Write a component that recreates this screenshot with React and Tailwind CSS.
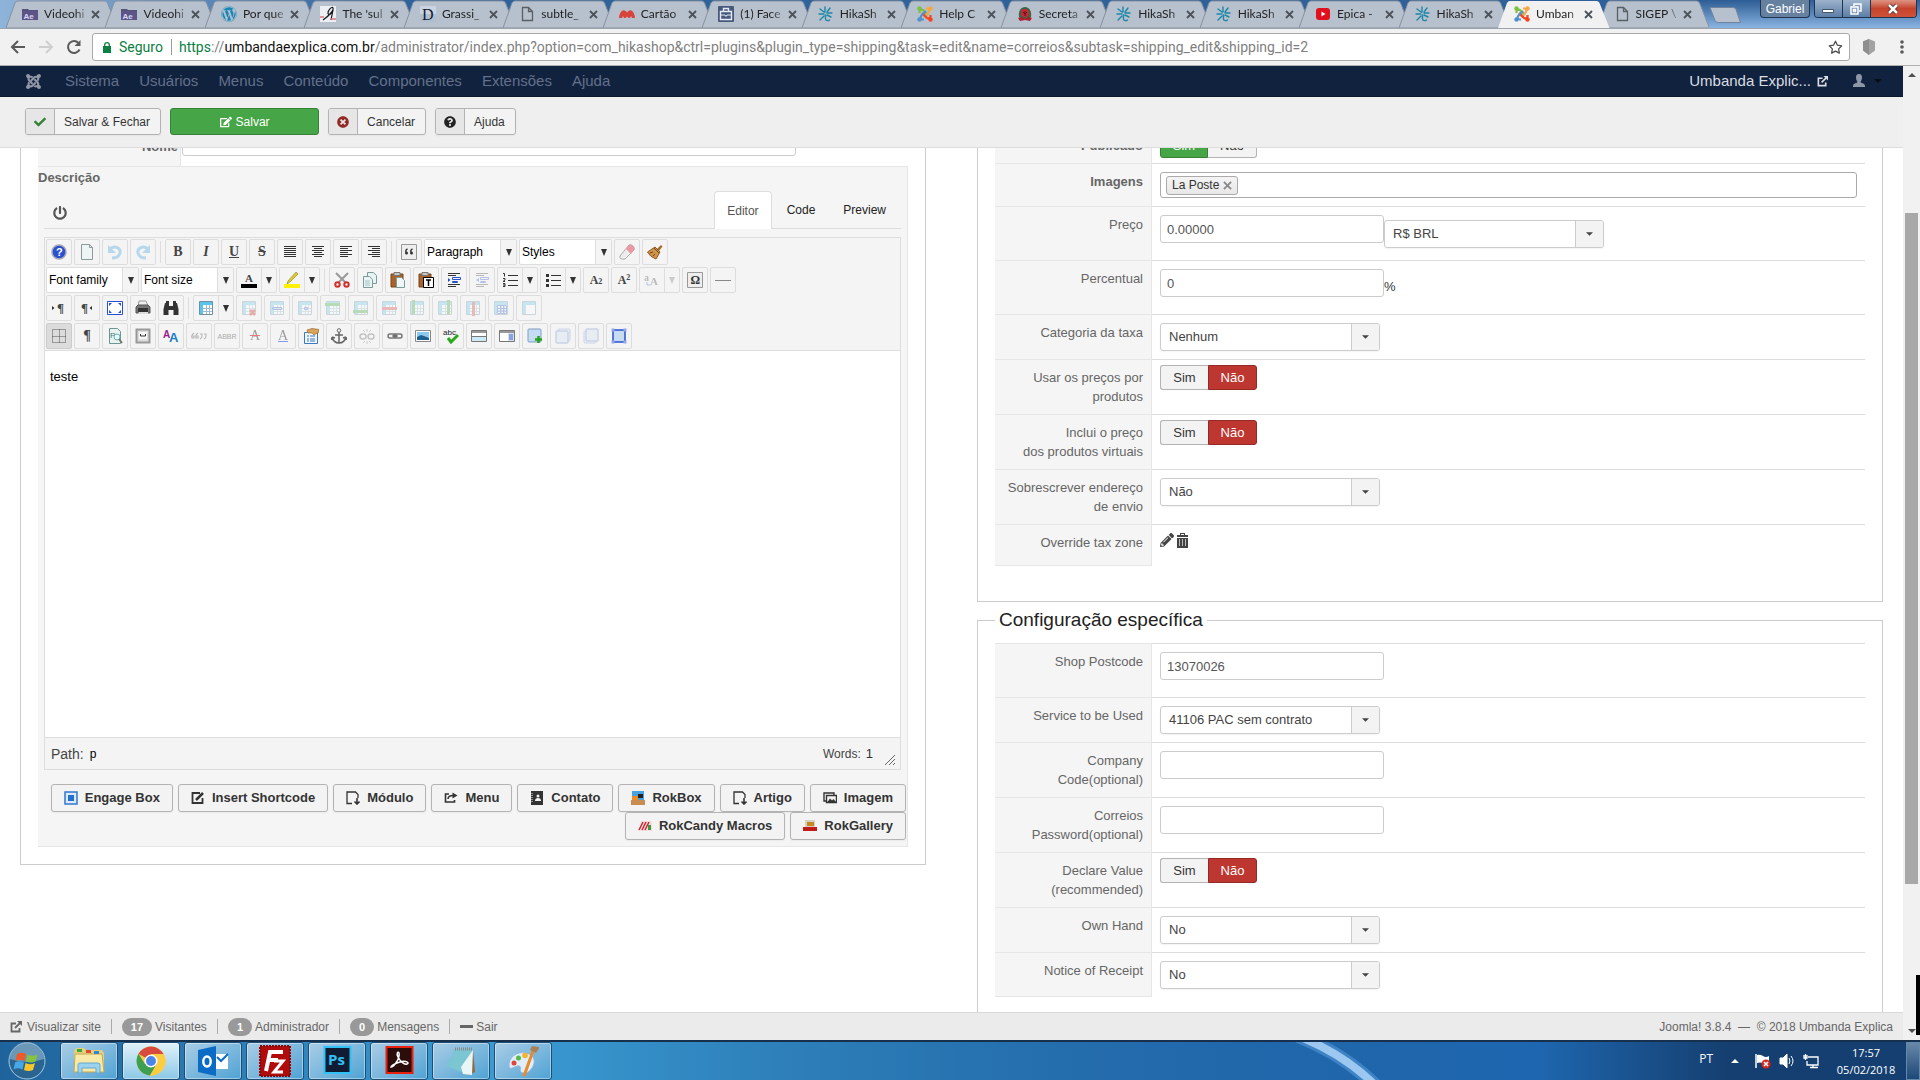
import React, { useState } from 'react';
import { FaJoomla, FaCheck, FaEdit, FaTimesCircle, FaQuestionCircle, FaPowerOff, FaWordpress, FaPencilAlt } from 'react-icons/fa';
import { FiStar } from 'react-icons/fi';

/* ---------- browser tab icons ---------- */

const AfterEffects = () => (
    <svg viewBox="0 0 16 16" className="w-4 h-4">
        <path d="M0 3h6l1 1h9v10H0z" fill="#56507c" />
        <path d="M0 5h16v9H0z" fill="#5b5587" />
        <text x="1.5" y="12.5" fontSize="8" fontWeight="bold" fill="#ddd6f5" fontFamily="Liberation Sans, sans-serif">Ae</text>
    </svg>
);

const Svello = () => (
    <svg viewBox="0 0 16 16" className="w-4 h-4">
        <path d="M0 0h16v16H0z" fill="#eceef4" />
        <path d="M3 14C9 10 14 4 13 2s-5 2-5 5 4 1 5-3l-2 10" fill="none" stroke="#15151c" strokeWidth="1.2" />
        <path d="M0 11h4M11 13h5" stroke="#d77" strokeWidth="1.5" />
    </svg>
);

const LetterD = () => (
    <svg viewBox="0 0 16 16" className="w-4 h-4">
        <path d="M0 0h16v16H0z" fill="#c8d4e2" />
        <path d="M0 8h16v8H0z" fill="#aebfd2" />
        <text x="2" y="14" fontSize="16" fill="#141a2c" fontFamily="Liberation Serif, serif">D</text>
    </svg>
);

const PageIcon = () => (
    <svg viewBox="0 0 16 16" className="w-4 h-4">
        <path d="M3.5 1.5h6l4 4v9h-10zM9.5 1.5v4h4" fill="none" stroke="#5a5f66" strokeWidth="1.3" />
    </svg>
);

const CardIcon = () => (
    <svg viewBox="0 0 16 16" className="w-4 h-4">
        <path d="M0 12C0 8 3 3 5.500 4.500 7 5 7.500 6 8 6.500 8.500 6 9 5 10.500 4.500 13 3 16 8 16 12h-3l-1-2-1 2H9.500L8 10.500 6.500 12H5l-1-2-1 2z" fill="#d9443a" />
    </svg>
);

const BagIcon = () => (
    <svg viewBox="0 0 16 16" className="w-4 h-4">
        <rect width="16" height="16" rx="1" fill="#46597c" />
        <path d="M2.5 5.5h11v8h-11zM5.500 5.500v-3h5v3" fill="none" stroke="#e6ebf3" strokeWidth="1.4" />
        <path d="M3 9h4l1 1.500 1-1.500h4" fill="none" stroke="#e6ebf3" />
    </svg>
);

const HikaIcon = () => (
    <svg viewBox="0 0 16 16" className="w-4 h-4" fill="none" stroke="#1c86a6" strokeWidth="1.4" strokeLinecap="round">
        <path d="M7 1v5M2 3l4 3M12 2L9 6M1 8h5M14 7H9M6 10l-4 4M7.500 9v4c0 2 3 2 4 1M9 9l4 2" />
    </svg>
);

const JoomlaColor = () => (
    <svg viewBox="0 0 16 16" className="w-4 h-4" fill="none" strokeWidth="2.2">
        <path d="M2.500 7V5.500C2.500 3.500 5 3 6.500 4.500L11 9" stroke="#7ac143" />
        <path d="M9 2.500h1.500c2 0 2.500 2.500 1 4L7 11" stroke="#f9a541" />
        <path d="M13.500 9v1.500c0 2-2.500 2.500-4 1L5 7" stroke="#f44321" />
        <path d="M7 13.500H5.500c-2 0-2.500-2.500-1-4L9 5" stroke="#5091cd" />
        <circle cx="2.500" cy="2.500" r="2.200" fill="#7ac143" stroke="none" />
        <circle cx="13.500" cy="2.500" r="2.200" fill="#f9a541" stroke="none" />
        <circle cx="13.500" cy="13.500" r="2.200" fill="#f44321" stroke="none" />
        <circle cx="2.500" cy="13.500" r="2.200" fill="#5091cd" stroke="none" />
    </svg>
);

const CrestIcon = () => (
    <svg viewBox="0 0 16 16" className="w-4 h-4">
        <path d="M2 11C1 5 4 1 8 1s7 4 6 10l-3 3H5z" fill="#3d6647" />
        <circle cx="8" cy="7" r="4" fill="#cf2433" />
        <path d="M6 6l2 2 2-2M8 5v5" stroke="#4a1a20" fill="none" />
        <path d="M1 12l4-1 3 2 3-2 4 1-2 3-5-1-5 1z" fill="#b01c2a" />
    </svg>
);

const YoutubeIcon = () => (
    <svg viewBox="0 0 16 16" className="w-4 h-4">
        <rect x="1" y="2" width="14" height="12" rx="3" fill="#e0101e" />
        <path d="M6.500 5.500v5l4-2.500z" fill="#fff" />
    </svg>
);

const tabs = [
    { title: 'Videohi', icon: <AfterEffects /> },
    { title: 'Videohi', icon: <AfterEffects /> },
    { title: 'Por que', icon: <FaWordpress className="w-4 h-4 text-[#1b87b8]" /> },
    { title: "The 'sul", icon: <Svello /> },
    { title: 'Grassi_', icon: <LetterD /> },
    { title: 'subtle_', icon: <PageIcon /> },
    { title: 'Cartão', icon: <CardIcon /> },
    { title: '(1) Face', icon: <BagIcon /> },
    { title: 'HikaSh', icon: <HikaIcon /> },
    { title: 'Help C', icon: <JoomlaColor /> },
    { title: 'Secreta', icon: <CrestIcon /> },
    { title: 'HikaSh', icon: <HikaIcon /> },
    { title: 'HikaSh', icon: <HikaIcon /> },
    { title: 'Epica -', icon: <YoutubeIcon /> },
    { title: 'HikaSh', icon: <HikaIcon /> },
    { title: 'Umban', icon: <JoomlaColor />, active: true },
    { title: 'SIGEP \\', icon: <PageIcon /> },
];

const BrowserTab = ({ tab }) => (
    <div className={`relative flex-1 min-w-0 flex items-center h-7 pl-4 pr-[5px] ${tab.active ? 'z-10' : ''}`}>
        <svg className="absolute left-0 top-0 h-full w-[calc(100%+12px)]" viewBox="0 0 112 28" preserveAspectRatio="none">
            <path d="M0 28L9 3q1-2 3-2h87q2 0 3 2l10 25z" fill={tab.active ? '#f2f1f2' : '#b7c1ce'} stroke="#8791a0" strokeWidth={tab.active ? 0 : 1} />
        </svg>
        <span className="relative shrink-0">{tab.icon}</span>
        <span className="relative flex-1 ml-1.5 whitespace-nowrap text-xs text-[#222] [mask-image:linear-gradient(to_right,#000_75%,transparent_115%)]">{tab.title}</span>
        <button aria-label="Fechar guia" className="relative shrink-0 ml-1.5">
            <svg viewBox="0 0 9 9" className="w-[9px] h-[9px]"><path d="M1 1l7 7M8 1L1 8" stroke="#4c5259" strokeWidth="1.8" /></svg>
        </button>
    </div>
);

const Browser = () => (
    <header className="shrink-0 font-[Lato,'Liberation_Sans',sans-serif]">
        <div className="flex h-7 pl-1.5 bg-linear-to-r from-[#8fb4da] via-[#2f639c] via-20% to-[#2d5f98]">
            {tabs.map((tab, i) => <BrowserTab key={i} tab={tab} />)}
            <div className="w-[223px] shrink-0 flex bg-linear-to-b from-[#2c5d94] to-[#8ab4e2]">
                <button aria-label="Nova guia" className="mt-[7px] ml-3 w-8 h-4">
                    <svg viewBox="0 0 32 16" className="w-8 h-4"><path d="M1 .5h23q2 0 3 2l4.500 13H9q-2 0-3-2z" fill="#b7c1ce" stroke="#71839b" /></svg>
                </button>
                <button className="ml-[19px] w-[50px] h-[18px] rounded-b border border-t-0 border-[#20344f] bg-[#66819f] font-['Liberation_Sans',sans-serif] text-xs leading-4 text-white">Gabriel</button>
                <div className="ml-1 flex h-[18px] w-[103px] overflow-hidden rounded-b border border-t-0 border-[#20344f]">
                    <button aria-label="Minimizar" className="w-7 border-r border-[#20344f] bg-linear-to-b from-[#9db3cc] to-[#5c7ea6] flex items-center justify-center">
                        <svg viewBox="0 0 12 12" className="w-3 h-3"><path d="M.5 6.500h11v3H.5z" fill="#fff" stroke="#44546a" /></svg>
                    </button>
                    <button aria-label="Restaurar" className="w-7 border-r border-[#20344f] bg-linear-to-b from-[#9db3cc] to-[#5c7ea6] flex items-center justify-center">
                        <svg viewBox="0 0 12 12" className="w-3 h-3" fill="none" stroke="#fff" strokeWidth="1.500"><path d="M4 3V1h7v7H9M1 4h7v7H1zM3.500 6.500h2v2h-2z" /></svg>
                    </button>
                    <button aria-label="Fechar" className="flex-1 bg-linear-to-b from-[#dc9384] via-[#c5432c] to-[#cf5238] flex items-center justify-center">
                        <svg viewBox="0 0 12 12" className="w-3 h-3"><path d="M2 2l8 8M10 2l-8 8" stroke="#4a2723" strokeWidth="4" /><path d="M2 2l8 8M10 2l-8 8" stroke="#fff" strokeWidth="2.500" /></svg>
                    </button>
                </div>
            </div>
        </div>
        <div className="flex items-center h-[38px] border-y border-t-[#9aa3ae] border-b-[#b0b0b0] bg-[#f2f1f2] pl-2.5">
            <div className="flex w-[82px] gap-3">
                <button aria-label="Voltar"><svg viewBox="0 0 16 16" className="w-4 h-4" fill="none" stroke="#5a5a5a" strokeWidth="2"><path d="M15 8H2M8 2L2 8l6 6" /></svg></button>
                <button aria-label="Avançar"><svg viewBox="0 0 16 16" className="w-4 h-4" fill="none" stroke="#cfcfcf" strokeWidth="2"><path d="M1 8h13M8 2l6 6-6 6" /></svg></button>
                <button aria-label="Recarregar"><svg viewBox="0 0 16 16" className="w-4 h-4" fill="none" stroke="#5a5a5a" strokeWidth="2"><path d="M13.500 10.500A6 6 0 1 1 12.500 4" /><path d="M14.500 1v6h-6z" fill="#5a5a5a" stroke="none" /></svg></button>
            </div>
            <div className="flex flex-1 items-center h-7 rounded-[3px] border border-[#a9a9a9] bg-white pl-2.5 pr-1.5 font-[Roboto,'Liberation_Sans',sans-serif] text-sm whitespace-nowrap">
                <svg viewBox="0 0 8 11" className="w-2 h-[11px] mr-2"><path d="M0 4h8v7H0z" fill="#0b8043" /><path d="M1.700 4.500V3a2.300 2.300 0 0 1 4.600 0v1.500" fill="none" stroke="#0b8043" strokeWidth="1.300" /></svg>
                <span className="w-11 text-[#0b8043]">Seguro</span>
                <span className="w-px h-4 bg-[#9a9a9a] ml-2 mr-[7px]" />
                <span className="flex-1 text-[#7f7f7f]"><span className="text-[#0b8043]">https</span>://<span className="text-[#111]">umbandaexplica.com.br</span>/administrator/index.php?option=com_hikashop&amp;ctrl=plugins&amp;plugin_type=shipping&amp;task=edit&amp;name=correios&amp;subtask=shipping_edit&amp;shipping_id=2</span>
                <FiStar className="w-[15px] h-[15px] text-[#4a4a4a]" />
            </div>
            <svg viewBox="0 0 14 16" className="w-3.5 h-4 ml-3"><path d="M7 0l6 2.500v9L7 16l-6-4.500v-9z" fill="#a3a3a3" /><path d="M7 0v16l-6-4.500v-9z" fill="#8e8e8e" /></svg>
            <svg viewBox="0 0 4 14" className="w-1 h-3.5 ml-6 mr-4" fill="#5a5a5a"><circle cx="2" cy="2" r="1.800" /><circle cx="2" cy="7" r="1.800" /><circle cx="2" cy="12" r="1.800" /></svg>
        </div>
    </header>
);

/* ---------- admin bars ---------- */

const ExternalIcon = ({ className }) => (
    <svg viewBox="0 0 12 12" className={className} fill="none" stroke="currentColor" strokeWidth="1.800">
        <path d="M6 2.500H1.500v8h8V7M5 7l5-5" />
        <path d="M7 0h5v5z" fill="currentColor" stroke="none" />
    </svg>
);

const menus = ['Sistema', 'Usuários', 'Menus', 'Conteúdo', 'Componentes', 'Extensões', 'Ajuda'];

const Navbar = () => (
    <nav className="flex items-center h-[31px] shrink-0 border-b border-[#0b182c] bg-[#10223e] pl-[25px] pr-[21px] text-[15px] text-[#64708a]">
        <FaJoomla className="w-[17px] h-[17px] mr-[13px] text-[#9299a6]" />
        {menus.map((m) => <a key={m} href="#" className="px-2.5">{m}</a>)}
        <a href="#" className="ml-auto flex items-center gap-1.5 text-[#dadde2]">Umbanda Explic... <ExternalIcon className="w-[11px] h-[11px]" /></a>
        <button aria-label="Conta" className="ml-6 flex items-center gap-2">
            <svg viewBox="0 0 14 14" className="w-3.5 h-3.5" fill="#8e97a6"><path d="M7 0c2.200 0 3 1.500 3 3.500S9 7 8.500 8c0 1 4.500 1 4.500 4v1H1v-1c0-3 4.500-3 4.500-4C5 7 4 5.500 4 3.500S4.800 0 7 0z" /></svg>
            <svg viewBox="0 0 8 4" className="w-2 h-1"><path d="M0 0h8L4 4z" fill="#060d18" /></svg>
        </button>
    </nav>
);

const ToolButton = ({ icon, children }) => (
    <button className="flex h-[27px] overflow-hidden rounded-[3px] border border-[#b3b3b3] bg-[#f3f3f3] text-xs text-[#333] shadow-xs">
        <span className="flex items-center justify-center w-[29px] h-full border-r border-[#b3b3b3] bg-[#e6e6e6]">{icon}</span>
        <span className="pl-[9px] pr-2.5 self-center">{children}</span>
    </button>
);

const Subhead = () => (
    <div className="relative z-10 flex items-center gap-[9px] h-[51px] shrink-0 border-b border-[#dcdcdc] bg-[#efefef] px-[25px] pb-px">
        <ToolButton icon={<FaCheck className="w-3 h-3 text-[#378137]" />}>Salvar &amp; Fechar</ToolButton>
        <button className="flex items-center justify-center gap-1 w-[149px] h-[27px] rounded-[3px] border border-[#378137] bg-[#46a546] text-xs text-white">
            <FaEdit className="w-3 h-3" /> Salvar
        </button>
        <ToolButton icon={<FaTimesCircle className="w-3 h-3 text-[#942a25]" />}>Cancelar</ToolButton>
        <ToolButton icon={<FaQuestionCircle className="w-3 h-3 text-[#222]" />}>Ajuda</ToolButton>
    </div>
);

/* ---------- form parts ---------- */

const Row = ({ label, id, bold, last, tight, children }) => (
    <div className="flex">
        <label htmlFor={id} className={`w-[157px] shrink-0 border-t border-r border-[#e6e6e6] bg-[#f5f5f5] pt-2 pr-2 text-right whitespace-pre-line leading-[19px] text-[#666] ${bold ? 'font-bold' : 'pb-2'} ${last ? 'border-b min-h-[42px]' : ''}`}>{label}</label>
        <div className={`flex flex-1 items-start border-t border-[#ddd] px-2 ${tight ? 'py-[5px]' : 'py-2'}`}>{children}</div>
    </div>
);

const TextBox = ({ id, value = '' }) => (
    <input id={id} type="text" defaultValue={value} className="w-56 h-7 mb-[9px] rounded-[3px] border border-[#ccc] bg-white px-1.5 text-[13px] text-[#555]" />
);

const SelectBox = ({ id, value, label, className = '' }) => (
    <div className={`relative w-[220px] h-7 ${className}`}>
        <select id={id} aria-label={label} className="w-full h-full appearance-none rounded-[3px] border border-[#ccc] bg-white pl-2 text-[13px] text-[#444] shadow-xs">
            <option>{value}</option>
        </select>
        <span className="pointer-events-none absolute inset-y-px right-px flex w-7 items-center justify-center rounded-r-[2px] border-l border-[#ccc] bg-[#f3f3f3]">
            <svg viewBox="0 0 8 4" className="w-[7px] h-1"><path d="M0 0h8L4 4z" fill="#444" /></svg>
        </span>
    </div>
);

const YesNo = ({ id, initial = false }) => {
    const [on, setOn] = useState(initial);
    return (
        <div className="flex h-[25px] text-[13px] leading-[23px] text-center">
            <button id={id} onClick={() => setOn(true)} className={on ? 'w-12 rounded-l-[3px] border border-[#378137] bg-[#46a546] text-white' : 'w-12 rounded-l-[3px] border border-r-0 border-[#b3b3b3] bg-[#f3f3f3] text-[#333]'}>Sim</button>
            <button onClick={() => setOn(false)} className={on ? 'w-[49px] rounded-r-[3px] border border-l-0 border-[#b3b3b3] bg-[#f3f3f3] text-[#333]' : 'w-[49px] rounded-r-[3px] border border-[#942a25] bg-[#bd362f] text-white'}>Não</button>
        </div>
    );
};

/* ---------- editor toolbar icons ---------- */

const Svg = ({ children, off }) => <svg viewBox="0 0 16 16" className={`w-4 h-4 ${off ? 'opacity-30' : ''}`} fill="none">{children}</svg>;

const Lines = ({ d, off, children }) => <Svg off={off}><path d={d} stroke="#333" strokeWidth="1" />{children}</Svg>;

const Serif = ({ className = '', children }) => <span className={`font-['Liberation_Serif',serif] font-bold text-sm leading-none text-[#444] ${className}`}>{children}</span>;

const Grid = ({ off = true, children }) => (
    <Svg off={off}>
        <path d="M1.500 1.500h13v13h-13z" fill="#fff" stroke="#6d8fa0" />
        <path d="M2 2h12v3H2zM2 5h3v9H2z" fill="#5cc3ea" />
        <path d="M5 8.500h9M5 11.500h9M8.500 5v9M11.500 5v9" stroke="#9ebccc" />
        {children}
    </Svg>
);

const Paste = ({ children }) => (
    <Svg>
        <path d="M1 2h12v13H1z" fill="#a8622b" stroke="#7d4519" />
        <path d="M4 .5h6v3H4z" fill="#c9c9c9" stroke="#777" />
        {children}
    </Svg>
);

const Window = ({ children }) => (
    <Svg>
        <path d="M.5 2.500h15v11H.5z" fill="#fff" stroke="#777" />
        <path d="M1 3h14v2H1z" fill="#999" />
        {children}
    </Svg>
);

const Btn = ({ label, active, children }) => (
    <button aria-label={label} className={`flex w-[26px] h-[26px] shrink-0 items-center justify-center rounded-[2px] border ${active ? 'border-[#ccc] bg-[#dcdcdc]' : 'border-[#ddd] bg-[#f4f4f4]'}`}>{children}</button>
);

const Split = ({ label, off, children }) => (
    <div className="flex w-[41px] h-[26px] rounded-[2px] border border-[#ddd] bg-[#f4f4f4]">
        <button aria-label={label} className="flex w-[25px] items-center justify-center border-r border-[#ddd]">{children}</button>
        <button aria-label={`${label} opções`} className="flex flex-1 items-center justify-center"><Down off={off} /></button>
    </div>
);

const Down = ({ off }) => <svg viewBox="0 0 6 7" className="w-1.5 h-[7px]"><path d="M0 0h6L3 7z" fill={off ? '#ccc' : '#333'} /></svg>;

const Sep = () => <span className="w-px h-[22px] mx-0.5 my-0.5 bg-[#ddd]" />;

const ListBox = ({ value }) => (
    <div className="relative w-[93px] h-[26px]">
        <select aria-label={value} className="w-full h-full appearance-none rounded-[2px] border border-[#ddd] bg-white pl-0.5 text-xs text-black">
            <option>{value}</option>
        </select>
        <span className="pointer-events-none absolute inset-y-px right-px flex w-4 items-center justify-center border-l border-[#ddd] bg-[#f4f4f4]"><Down /></span>
    </div>
);

const Toolbar = () => (
    <div className="flex flex-col gap-0.5 border-b border-[#ddd] p-px text-[#444]">
        <div className="flex gap-0.5">
            <Btn label="Ajuda"><Svg><circle cx="8" cy="8" r="7" fill="#2a4fd0" stroke="#a9a9b5" strokeWidth="1.500" /><text x="5" y="12" fontSize="11" fontWeight="bold" fill="#fff" fontFamily="Liberation Sans, sans-serif">?</text></Svg></Btn>
            <Btn label="Novo"><Svg><path d="M2.500.500h8l3 3v12h-11z" fill="#eef6f5" stroke="#8a9a9a" /><path d="M10.500.500v3h3" stroke="#8a9a9a" /></Svg></Btn>
            <Btn label="Desfazer"><Svg off><path d="M3 5c5-4 11-1 10 4-1 4-5 5-8 5" stroke="#2f95dd" strokeWidth="3" /><path d="M1 1v8h8z" fill="#2f95dd" /></Svg></Btn>
            <Btn label="Refazer"><Svg off><path d="M13 5C8 1 2 4 3 9c1 4 5 5 8 5" stroke="#2f95dd" strokeWidth="3" /><path d="M15 1v8H7z" fill="#2f95dd" /></Svg></Btn>
            <Sep />
            <Btn label="Negrito"><Serif>B</Serif></Btn>
            <Btn label="Itálico"><Serif className="italic">I</Serif></Btn>
            <Btn label="Sublinhado"><Serif className="underline">U</Serif></Btn>
            <Btn label="Tachado"><Serif className="line-through">S</Serif></Btn>
            <Btn label="Justificar"><Lines d="M2 2.500h12M2 4.500h12M2 6.500h12M2 8.500h12M2 10.500h12M2 12.500h12" /></Btn>
            <Btn label="Centralizar"><Lines d="M2 2.500h12M4 4.500h8M2 6.500h12M4 8.500h8M2 10.500h12M4 12.500h8" /></Btn>
            <Btn label="Esquerda"><Lines d="M2 2.500h12M2 4.500h8M2 6.500h12M2 8.500h8M2 10.500h12M2 12.500h8" /></Btn>
            <Btn label="Direita"><Lines d="M2 2.500h12M6 4.500h8M2 6.500h12M6 8.500h8M2 10.500h12M6 12.500h8" /></Btn>
            <Sep />
            <Btn label="Citação"><Svg><path d="M.500.500h15v15H.500z" fill="#eee" stroke="#999" /><path d="M6.500 5C5 5.500 4.500 7 5 8M11.500 5C10 5.500 9.500 7 10 8" stroke="#333" strokeWidth="1.500" /><circle cx="5.500" cy="9" r="1.500" fill="#333" /><circle cx="10.500" cy="9" r="1.500" fill="#333" /></Svg></Btn>
            <ListBox value="Paragraph" />
            <ListBox value="Styles" />
            <Btn label="Borracha"><Svg><path d="M1 12L10 1q2-1 4 1t1 4L6 15q-6 1-5-3z" fill="#eee" stroke="#aaa" /><path d="M7 5l3-4q2-1 4 1t1 4l-3 4z" fill="#eb98a4" /></Svg></Btn>
            <Btn label="Limpar"><Svg><path d="M10 5l4-4 1.500 1.500L12 7z" fill="#a5692c" /><path d="M8 3l5 5-4 7Q3 13 .500 8z" fill="#cf944c" stroke="#8d5a24" /><path d="M7 4l5 5M3 9l3-1M6 12l2-2" stroke="#70451a" /></Svg></Btn>
        </div>
        <div className="flex gap-0.5">
            <ListBox value="Font family" />
            <ListBox value="Font size" />
            <Split label="Cor do texto"><Svg><text x="4" y="10" fontSize="11" fontWeight="bold" fill="#444" fontFamily="Liberation Serif, serif">A</text><path d="M0 12h16v4H0z" fill="#000" /></Svg></Split>
            <Split label="Realce"><Svg><path d="M4 9l8-9 2 2-8 8-3 2z" fill="#e0cb2c" stroke="#8a7a22" strokeWidth=".6" /><path d="M0 12h16v4H0z" fill="#fff200" /></Svg></Split>
            <Sep />
            <Btn label="Recortar"><Svg><path d="M2 1l10 10M14 1L4 11" stroke="#999" strokeWidth="2" /><circle cx="3.500" cy="12.500" r="2.200" stroke="#d3302c" strokeWidth="2" /><circle cx="12.500" cy="12.500" r="2.200" stroke="#d3302c" strokeWidth="2" /></Svg></Btn>
            <Btn label="Copiar"><Svg><path d="M5.500.500h6l3 3v8h-9z" fill="#e8f3f3" stroke="#7d9a9a" /><path d="M1.500 4.500h6l3 3v8h-9z" fill="#e8f3f3" stroke="#7d9a9a" /><path d="M3 9h5M3 11h5M3 13h5" stroke="#a6c4c4" /></Svg></Btn>
            <Btn label="Colar"><Paste><path d="M6.500 5.500h5l3 3v7h-8z" fill="#eef6f6" stroke="#7d9a9a" /></Paste></Btn>
            <Btn label="Colar texto"><Paste><path d="M5.500 5.500h10v10h-10z" fill="#fff" stroke="#000" /><path d="M8 8h5M10.500 8v6" stroke="#000" strokeWidth="1.500" /></Paste></Btn>
            <Btn label="Aumentar recuo"><Lines d="M2 1.500h12M2 3.500h8M2 12.500h12M2 14.500h8"><path d="M6.500 5.500h8v2h-8zM6.500 9.500h5v1h-5z" stroke="#2750cf" /><path d="M2 6v4l2.500-2z" fill="#2750cf" /></Lines></Btn>
            <Btn label="Diminuir recuo"><Lines off d="M2 1.500h12M2 3.500h8M2 12.500h12M2 14.500h8"><path d="M6.500 5.500h8v2h-8zM6.500 9.500h5v1h-5z" stroke="#2750cf" /><path d="M5 6v4L2 8z" fill="#2750cf" /></Lines></Btn>
            <Split label="Lista numerada"><Lines d="M6 3.500h10M6 8.500h10M6 13.500h10"><path d="M1 1.500h1.500v3M1 6.500h2v1.500l-2 1.500h2M1 11.500h2v3H1M1 13h2" stroke="#333" /></Lines></Split>
            <Split label="Lista"><Lines d="M6 3.500h10M6 8.500h10M6 13.500h10"><path d="M1 2h3v3H1zM1 7h3v3H1zM1 12h3v3H1z" fill="#333" /></Lines></Split>
            <Btn label="Subscrito"><Serif className="text-xs">A<span className="text-[8px]">2</span></Serif></Btn>
            <Btn label="Sobrescrito"><Serif className="text-xs">A<sup className="text-[8px]">2</sup></Serif></Btn>
            <Split label="Maiúsculas" off><Svg off><text x="0" y="9" fontSize="10" fontWeight="bold" fill="#333" fontFamily="Liberation Serif, serif">a</text><text x="6" y="13" fontSize="11" fontWeight="bold" fill="#333" fontFamily="Liberation Serif, serif">A</text><path d="M3 10v3h3" stroke="#2750cf" /></Svg></Split>
            <Btn label="Símbolo"><Svg><path d="M.500.500h15v15H.500z" fill="#eee" stroke="#999" /><text x="3.500" y="12" fontSize="12" fontWeight="bold" fill="#333" fontFamily="Liberation Serif, serif">Ω</text></Svg></Btn>
            <Btn label="Linha"><Svg><path d="M0 8.500h16" stroke="#888" /></Svg></Btn>
        </div>
        <div className="flex gap-0.5">
            <Btn label="Esquerda para direita"><Svg><path d="M1 6v4l2.500-2z" fill="#333" /><text x="6" y="12" fontSize="13" fontWeight="bold" fill="#444" fontFamily="Liberation Serif, serif">¶</text></Svg></Btn>
            <Btn label="Direita para esquerda"><Svg><path d="M13 6v4l-2.500-2z" fill="#333" /><text x="2" y="12" fontSize="13" fontWeight="bold" fill="#444" fontFamily="Liberation Serif, serif">¶</text></Svg></Btn>
            <Btn label="Tela cheia"><Svg><path d="M.500 1.500h15v13H.500z" fill="#fff" stroke="#2750cf" /><path d="M2 6V3h3zM11 3h3v3zM2 10v3h3zM14 10v3h-3z" fill="#2750cf" /></Svg></Btn>
            <Btn label="Imprimir"><Svg><path d="M4 1h7l2 5H3z" fill="#eee" stroke="#999" /><path d="M1 7l2-2h10l2 2v6H1z" fill="#777" stroke="#555" /><path d="M3 8h10v4H3z" fill="#333" /><path d="M4 12h9v2H3z" fill="#ddd" /></Svg></Btn>
            <Btn label="Localizar"><Svg><path d="M2 3h4v3h4V3h4l1.500 6v6h-5v-5h-5v5H.500V9zM3 1h3v2H3zM10 1h3v2h-3z" fill="#333" /></Svg></Btn>
            <Sep />
            <Split label="Tabela"><Grid off={false} /></Split>
            <Btn label="Excluir tabela"><Grid><path d="M9 10l5 5M14 10l-5 5" stroke="#c00" strokeWidth="2.500" /></Grid></Btn>
            <Btn label="Linha da tabela"><Grid><path d="M3.500 7.500h9v2h-9z" stroke="#2750cf" /></Grid></Btn>
            <Btn label="Célula"><Grid><path d="M7.500 7.500h3v2h-3z" stroke="#2750cf" /></Grid></Btn>
            <Btn label="Linha antes"><Grid><path d="M0 3h15v3H0z" fill="#2fa52f" /></Grid></Btn>
            <Btn label="Linha depois"><Grid><path d="M0 10h15v3H0z" fill="#2fa52f" /></Grid></Btn>
            <Btn label="Excluir linha"><Grid><path d="M1 7h15v3H1z" fill="#cf3535" /></Grid></Btn>
            <Btn label="Coluna antes"><Grid><path d="M3 0h3v14H3z" fill="#2fa52f" /></Grid></Btn>
            <Btn label="Coluna depois"><Grid><path d="M10 0h3v14h-3z" fill="#2fa52f" /></Grid></Btn>
            <Btn label="Excluir coluna"><Grid><path d="M7 2h3v14H7z" fill="#cf3535" /></Grid></Btn>
            <Btn label="Dividir células"><Grid><path d="M4.500 5.500h9v8h-9zM4.500 8.500h9M4.500 11h9M7.500 5.500v8M10.500 5.500v8" stroke="#2750cf" /></Grid></Btn>
            <Btn label="Mesclar células"><Grid><path d="M5 5h9v9H5z" fill="#fff" /></Grid></Btn>
        </div>
        <div className="flex gap-0.5">
            <Btn label="Guias" active><Svg><path d="M1.500 1.500h13v13h-13zM1.500 8.500h13M8.500 1.500v13" stroke="#555" strokeDasharray="1 1" /></Svg></Btn>
            <Btn label="Caracteres"><Serif>¶</Serif></Btn>
            <Btn label="Visualizar"><Svg><path d="M2.500.500h8l3 3v12h-11z" fill="#e8f3f1" stroke="#6f9494" /><text x="3" y="10" fontSize="8" fill="#357b7b" fontFamily="Liberation Sans, sans-serif">P</text><circle cx="10" cy="9" r="3" stroke="#7aa" fill="#dff" /><path d="M12 11l3 4" stroke="#777" strokeWidth="2" /></Svg></Btn>
            <Btn label="Espaço"><Svg><path d="M1.500 1.500h13v13h-13z" fill="#ddd" stroke="#999" strokeWidth="2" /><path d="M4 4h8v7H4z" fill="#f8f8f8" /><path d="M5.500 6v2h5V6" stroke="#333" /></Svg></Btn>
            <Btn label="Estilo"><Svg><text x="0" y="10" fontSize="10" fontWeight="bold" fill="#9c1b8c" fontFamily="Liberation Sans, sans-serif">A</text><text x="6" y="14" fontSize="13" fontWeight="bold" fill="#1681c8" fontFamily="Liberation Sans, sans-serif">A</text></Svg></Btn>
            <Btn label="Cite"><Svg off><path d="M3 5Q0 7 1 10h2V8H1M7 5Q4 7 5 10h2V8H5M9 6h2v2q0 2-2 3M13 6h2v2q0 2-2 3" stroke="#333" strokeWidth="1.200" /></Svg></Btn>
            <Btn label="ABBR"><span className="text-[7px] leading-none text-[#aaa]">ABBR</span></Btn>
            <Btn label="Removido"><Serif className="font-normal opacity-50 line-through decoration-red-600">A</Serif></Btn>
            <Btn label="Inserido"><Serif className="font-normal opacity-50 underline decoration-blue-700">A</Serif></Btn>
            <Btn label="Atributos"><Svg><path d="M1.500 4.500h13v11h-13z" fill="#f0f6fc" stroke="#3a78c0" /><path d="M4 8h2M7 8h5M4 11h2M7 11h5M4 13h2M7 13h5" stroke="#3a78c0" /><path d="M4 2l5-1.500 7 1V4l-5 3-2-2H5z" fill="#d9a45b" stroke="#9b6d2e" strokeWidth=".7" /></Svg></Btn>
            <Btn label="Âncora"><Svg><circle cx="8" cy="2.500" r="1.800" stroke="#666" /><path d="M8 4v11M4 7h8M1 9c1 4 4 6 7 6s6-2 7-6M1 9l-.5 3M1 9l3 1M15 9l.5 3M15 9l-3 1" stroke="#666" strokeWidth="1.500" /></Svg></Btn>
            <Btn label="Remover link"><Svg off><rect x="1" y="6" width="6" height="5" rx="2.500" stroke="#555" strokeWidth="1.500" /><rect x="9" y="6" width="6" height="5" rx="2.500" stroke="#555" strokeWidth="1.500" /><path d="M8 1v3M8 13v3M4 2l2 2M12 2l-2 2M4 15l2-2M12 15l-2-2" stroke="#777" /></Svg></Btn>
            <Btn label="Link"><Svg><rect x="1" y="6" width="8" height="4" rx="2" stroke="#777" strokeWidth="1.500" /><rect x="7" y="6" width="8" height="4" rx="2" stroke="#777" strokeWidth="1.500" /><path d="M5 8h6" stroke="#555" /></Svg></Btn>
            <Btn label="Imagem"><Svg><path d="M.500 2.500h15v11H.500z" fill="#fff" stroke="#888" /><path d="M2 4h12v8H2z" fill="#8cc9f0" /><path d="M2 9l4-2 3 1 5 2v2H2z" fill="#1f5f8f" /></Svg></Btn>
            <Btn label="Ortografia"><Svg><text x="0" y="7" fontSize="8" fill="#222" fontFamily="Liberation Sans, sans-serif">abc</text><path d="M5 10l3 4 7-7" stroke="#2aa81c" strokeWidth="3" /></Svg></Btn>
            <Btn label="Quebra de página"><Window><path d="M1 9h14v4H1z" fill="#cbe9f7" /><path d="M1 8.500h14" stroke="#777" /></Window></Btn>
            <Btn label="Leia mais"><Window><path d="M9 5h6v8H9z" fill="#d5def2" /><path d="M10 7h4M10 9h4M10 11h4" stroke="#3f68c9" /></Window></Btn>
            <Btn label="Nova camada"><Svg><rect x="1" y="1" width="13" height="13" rx="1" fill="#c6dcf2" stroke="#7f9fc4" /><path d="M11.500 8v7M8 11.500h7" stroke="#23a01c" strokeWidth="2.500" /></Svg></Btn>
            <Btn label="Avançar camada"><Svg off><rect x="3" y="1" width="12" height="12" rx="1" fill="#e5edf8" stroke="#6a8bc9" /><rect x="1" y="3" width="12" height="12" rx="1" fill="#cfdff5" stroke="#6a8bc9" strokeWidth="1.500" /></Svg></Btn>
            <Btn label="Recuar camada"><Svg off><rect x="1" y="3" width="12" height="12" rx="1" fill="#e5edf8" stroke="#6a8bc9" /><rect x="3" y="1" width="12" height="12" rx="1" fill="#cfdff5" stroke="#6a8bc9" strokeWidth="1.500" /></Svg></Btn>
            <Btn label="Camada absoluta"><Svg><path d="M2 2h12v12H2z" fill="#c6dcf2" stroke="#2750cf" strokeWidth="1.500" /><path d="M.500.500h3v3h-3zM12.500.500h3v3h-3zM.500 12.500h3v3h-3zM12.500 12.500h3v3h-3z" fill="#8fa8ee" /></Svg></Btn>
        </div>
    </div>
);

/* ---------- buttons under the editor ---------- */

const ic = 'w-3.5 h-3.5';

const AddPage = () => <svg viewBox="0 0 14 14" className={ic} fill="none" stroke="#333" strokeWidth="1.300"><path d="M6 12.500H1V1h8.500L12 3.500V7" /><path d="M11 7v6M8.500 10.500l2.500 2.500 2.500-2.500" strokeWidth="1.600" /></svg>;

const extras = [
    { name: 'Engage Box', icon: <svg viewBox="0 0 14 14" className={ic}><path d="M1 1h12v12H1z" fill="#dbe9f8" stroke="#2f78cf" strokeWidth="1.500" /><path d="M4 4h6v6H4z" fill="#2570cc" /></svg> },
    { name: 'Insert Shortcode', icon: <svg viewBox="0 0 14 14" className={ic} fill="none" stroke="#333" strokeWidth="1.800"><path d="M9 2H1.500v10h10V7" /><path d="M5 9l7-7" strokeWidth="2.500" /></svg> },
    { name: 'Módulo', icon: <AddPage /> },
    { name: 'Menu', icon: <svg viewBox="0 0 14 14" className={ic} fill="none" stroke="#333" strokeWidth="1.600"><path d="M5 3H1.500v8h9V9M4 8q0-3.500 5-3.500" /><path d="M8.500 1.500l5 3-5 3z" fill="#333" stroke="none" /></svg> },
    { name: 'Contato', icon: <svg viewBox="0 0 14 14" className={ic}><path d="M1 0h12v14H1z" fill="#333" /><path d="M2 2v10" stroke="#f3f3f3" strokeDasharray="1 1" /><circle cx="8" cy="5" r="1.500" fill="#f3f3f3" /><path d="M5 10q0-3 3-3t3 3z" fill="#f3f3f3" /></svg> },
    { name: 'RokBox', icon: <svg viewBox="0 0 14 14" className={ic}><path d="M1 0h12v9H1z" fill="#4aa3df" /><path d="M1 5h6v4H1z" fill="#ee8b22" /><path d="M7 3h5v4H7z" fill="#222" /><path d="M0 9h14v5H0z" fill="#c98d52" /></svg> },
    { name: 'Artigo', icon: <AddPage /> },
    { name: 'Imagem', icon: <svg viewBox="0 0 14 14" className={ic} fill="none" stroke="#333" strokeWidth="1.400"><path d="M3 10H1V2h10v2M3.500 4.500h10v7h-10z" /><path d="M4.500 11l2.500-3.500 2 2 1.500-1.500 2.500 3z" fill="#333" stroke="none" /></svg> },
    { name: 'RokCandy Macros', icon: <svg viewBox="0 0 14 14" className={ic}><path d="M3 2h11v10H0z" fill="#f6dfe0" /><path d="M1 11L5 3M4 11l4-8M7 11l4-8" stroke="#cb2a35" strokeWidth="1.500" /><path d="M10 6h3v5h-3z" fill="#3d9a3a" /></svg> },
    { name: 'RokGallery', icon: <svg viewBox="0 0 14 14" className={ic}><path d="M2 1h10v7H2z" fill="#d7cfc0" /><path d="M4 3h7v4H4z" fill="#c48a21" /><path d="M0 8h14v4H0z" fill="#c01a1a" /></svg> },
];

const EditorPanel = () => (
    <div className="flex-1 min-w-0">
        <fieldset className="border border-t-0 border-[#ccc] px-[17px] pb-[17px]">
            <div className="flex">
                <label htmlFor="nome" className="w-[143px] shrink-0 border-r border-[#e6e6e6] bg-[#f5f5f5] pt-2.5 pr-0.5 text-right font-bold text-[#666] leading-[19px]">Nome</label>
                <div className="flex-1 pt-px pl-px pb-2.5">
                    <input id="nome" type="text" className="block w-[614px] h-7 rounded-[3px] border border-[#ccc] bg-white px-1.5" />
                </div>
            </div>
            <div className="border border-l-0 border-[#e6e6e6] bg-[#f5f5f5] pb-1.5">
                <div className="pt-px leading-[19px] font-bold text-[#666]">Descrição</div>
                <div className="mx-1.5 mt-1 flex items-end border-b border-[#ddd] text-xs">
                    <button aria-label="Alternar editor" className="mb-2 ml-[9px]"><FaPowerOff className="w-3.5 h-3.5 text-[#555]" /></button>
                    <div className="ml-auto mr-0.5 flex -mb-px">
                        <button className="h-[38px] mr-0.5 rounded-t border border-b-0 border-[#ddd] bg-white px-3 text-[#555]">Editor</button>
                        <button className="h-[38px] mr-0.5 border border-transparent px-3 text-[#222]">Code</button>
                        <button className="h-[38px] border border-transparent px-3 text-[#222]">Preview</button>
                    </div>
                </div>
                <div className="mx-1.5 mt-2 border border-[#ddd] bg-[#f4f4f4]">
                    <Toolbar />
                    <div contentEditable suppressContentEditableWarning className="h-[386px] bg-white px-[5px] pt-4 leading-5 text-black"><p>teste</p></div>
                    <div className="flex h-8 items-center border-t border-[#ddd] pl-1.5 pr-[5px] text-[#444]">
                        <span className="text-sm">Path:</span>
                        <a href="#" className="ml-1.5 text-xs text-black">p</a>
                        <span className="ml-auto text-xs">Words:</span>
                        <span className="ml-[5px] text-[13px] text-[#333]">1</span>
                        <svg viewBox="0 0 10 10" className="w-2.5 h-2.5 ml-3 mt-3"><path d="M0 10L10 0M4 10l6-6M8 10l2-2" stroke="#666" /></svg>
                    </div>
                </div>
                <div className="mt-3.5 flex flex-wrap justify-end gap-x-[5px] pr-px">
                    {extras.map((b) => (
                        <button key={b.name} className="flex h-7 items-center gap-[7px] rounded-[3px] border border-[#b3b3b3] bg-[#f3f3f3] px-3 font-bold text-[#333] shadow-xs">
                            {b.icon}{b.name}
                        </button>
                    ))}
                </div>
            </div>
        </fieldset>
    </div>
);

const SettingsPanel = () => (
    <div className="flex-1 min-w-0">
        <fieldset className="border border-t-0 border-[#ccc] px-[17px] pb-[35px]">
            <Row label="Publicado" id="pub" bold tight><YesNo id="pub" initial /></Row>
            <Row label="Imagens" id="img" bold>
                <div className="flex flex-1 h-[26px] items-center rounded-[3px] border border-[#aaa] bg-white pl-[5px]">
                    <span className="flex h-[19px] items-center gap-1 rounded-[3px] border border-[#aaa] bg-linear-to-b from-[#f4f4f4] to-[#e8e8e8] px-[5px] text-xs text-[#333]">
                        La Poste
                        <button aria-label="Remover"><svg viewBox="0 0 10 10" className="w-[9px] h-[9px]"><path d="M1 1l8 8M9 1L1 9" stroke="#888" strokeWidth="2" /></svg></button>
                    </span>
                    <input id="img" type="text" className="flex-1 outline-none" />
                </div>
            </Row>
            <Row label="Preço" id="preco"><TextBox id="preco" value="0.00000" /><SelectBox label="Moeda" value="R$ BRL" className="mt-[5px]" /></Row>
            <Row label="Percentual" id="perc"><TextBox id="perc" value="0" /><span className="pt-2 text-[#333]">%</span></Row>
            <Row label="Categoria da taxa" id="taxa"><SelectBox id="taxa" value="Nenhum" /></Row>
            <Row label="Usar os preços por produtos" id="usar" tight><YesNo id="usar" /></Row>
            <Row label={'Inclui o preço\ndos produtos virtuais'} id="inclui" tight><YesNo id="inclui" /></Row>
            <Row label="Sobrescrever endereço de envio" id="sobre"><SelectBox id="sobre" value="Não" /></Row>
            <Row label="Override tax zone" id="zone" last>
                <button id="zone" aria-label="Editar"><FaPencilAlt className="w-3.5 h-3.5 text-[#444]" /></button>
                <button aria-label="Excluir" className="ml-[3px]">
                    <svg viewBox="0 0 11 15" className="w-[11px] h-[15px]"><path d="M0 2h11v2H0zM3 0h5v2H7V1H4v1H3zM0 5h11v10H0z" fill="#444" /><path d="M2.500 6v7M5.500 6v7M8.500 6v7" stroke="#bbb" /></svg>
                </button>
            </Row>
        </fieldset>
        <fieldset className="mt-1.5 border border-[#ccc] px-[17px] pb-9">
            <legend className="px-1 text-[19px] leading-6 text-[#222]">Configuração específica</legend>
            <div className="pt-[11px]">
                <Row label="Shop Postcode" id="cep"><TextBox id="cep" value="13070026" /></Row>
                <Row label="Service to be Used" id="service"><SelectBox id="service" value="41106 PAC sem contrato" /></Row>
                <Row label={'Company\nCode(optional)'} id="company"><TextBox id="company" /></Row>
                <Row label={'Correios\nPassword(optional)'} id="pass"><TextBox id="pass" /></Row>
                <Row label={'Declare Value\n(recommended)'} id="declare" tight><YesNo id="declare" /></Row>
                <Row label="Own Hand" id="own"><SelectBox id="own" value="No" /></Row>
                <Row label="Notice of Receipt" id="receipt" last><SelectBox id="receipt" value="No" /></Row>
            </div>
        </fieldset>
    </div>
);

const Badge = ({ children }) => <span className="h-[18px] rounded-full bg-[#999] px-[9px] text-[11px] leading-[18px] font-bold text-white">{children}</span>;

const Bar = () => <span className="w-px h-[15px] mx-2.5 bg-[#aaa]" />;

const StatusBar = () => (
    <footer className="relative z-10 flex h-7 shrink-0 items-center border-t border-[#d8d8d8] bg-[#ebebeb] pl-2.5 pr-2.5 text-xs text-[#666]">
        <a href="#" className="flex items-center gap-[5px]"><ExternalIcon className="w-3 h-3" />Visualizar site</a>
        <Bar />
        <Badge>17</Badge><span className="ml-[3px]">Visitantes</span>
        <Bar />
        <Badge>1</Badge><span className="ml-[3px]">Administrador</span>
        <Bar />
        <Badge>0</Badge><span className="ml-[3px]">Mensagens</span>
        <Bar />
        <a href="#" className="flex items-center gap-[3px]"><span className="w-[13px] h-[3px] bg-[#666]" />Sair</a>
        <span className="ml-auto whitespace-pre">Joomla! 3.8.4  —  © 2018 Umbanda Explica</span>
    </footer>
);

const Scrollbar = () => (
    <div className="flex w-[17px] shrink-0 flex-col items-center bg-[#f1f1f1]">
        <svg viewBox="0 0 8 4" className="w-2 h-1 my-[7px]"><path d="M0 4h8L4 0z" fill="#505050" /></svg>
        <div className="flex-129" />
        <div className="flex-673 w-[13px] bg-[#a8a8a8]" />
        <div className="flex-138" />
        <svg viewBox="0 0 8 4" className="w-2 h-1 my-[7px]"><path d="M0 0h8L4 4z" fill="#505050" /></svg>
    </div>
);

/* ---------- taskbar ---------- */

const apps = [
    { name: 'Explorer', icon: <svg viewBox="0 0 32 32" className="w-8 h-8"><path d="M1 6l2-3h8l2 2h16l2 3v19H1z" fill="#e5cf7c" /><path d="M2 9h27l2 18H1z" fill="#f7e9a8" stroke="#c4a84e" /><path d="M4 4h5v3H4z" fill="#3aa83a" /><path d="M13 5h5v3h-5z" fill="#e04a30" /><path d="M21 6h5v3h-5z" fill="#2f86d8" /><path d="M5 28v-8q0-2 2-2h18q2 0 2 2v8h-4v-5H9v5z" fill="#9bd3ee" stroke="#64a9d0" /></svg> },
    { name: 'Chrome', light: true, icon: <svg viewBox="0 0 32 32" className="w-8 h-8"><circle cx="16" cy="16" r="14.500" fill="#fccc43" /><path d="M16 16L3.500 8.700A14.500 14.500 0 0 1 28.600 9z" fill="#d84a3e" /><path d="M3.500 8.700A14.500 14.500 0 0 0 15 30.500L21 20 10 19z" fill="#3c9f52" /><path d="M28.600 9H16v7l6 3-7 11.500A14.500 14.500 0 0 0 28.600 9z" fill="#fccc43" /><circle cx="16" cy="16" r="6.500" fill="#fff" /><circle cx="16" cy="16" r="5" fill="#4a86ea" /></svg> },
    { name: 'Outlook', icon: <svg viewBox="0 0 32 32" className="w-8 h-8"><path d="M19 9h12v15H19z" fill="#fff" /><path d="M20 12l4 4 7-7" fill="none" stroke="#0a6cc4" strokeWidth="2" /><path d="M1 5l18-4v30L1 27z" fill="#0a6cc4" /><ellipse cx="10" cy="16.500" rx="3.700" ry="5" fill="none" stroke="#fff" strokeWidth="2.500" /></svg> },
    { name: 'FileZilla', icon: <svg viewBox="0 0 32 32" className="w-8 h-8"><path d="M1 1h30v30H1z" fill="#b00c0c" stroke="#8c0606" strokeDasharray="2 1" strokeWidth="2" /><path d="M7 26l4-19h13M9 15h10" fill="none" stroke="#fff" strokeWidth="4" /><path d="M15 16h9l-9 11h9" fill="none" stroke="#fff" strokeWidth="3" /></svg> },
    { name: 'Photoshop', icon: <svg viewBox="0 0 32 32" className="w-8 h-8"><path d="M3.500 2h26v26h-26z" fill="#101c33" stroke="#31c1f4" strokeWidth="2" /><text x="7" y="20" fontSize="15" fontWeight="bold" fill="#31c1f4" fontFamily="Open Sans, sans-serif">Ps</text></svg> },
    { name: 'Acrobat', icon: <svg viewBox="0 0 32 32" className="w-8 h-8"><path d="M3.500 2h26v26h-26z" fill="#2b0d0c" stroke="#e8200c" strokeWidth="2" /><path d="M8 22c4-1 9-9 8-14-1-2-3 0-1 4s6 8 9 7-1-4-7-2-9 4-9 5z" fill="none" stroke="#fff" strokeWidth="1.500" /></svg> },
    { name: 'Bloco de notas', icon: <svg viewBox="0 0 32 32" className="w-8 h-8"><path d="M28 5l2 22-6 3z" fill="#8c6b3c" /><path d="M10 4h18l-4 26-23-9z" fill="#7cc5d3" /><path d="M18 29l-2-7 12-17-1 25z" fill="#eaf5f7" /><path d="M10 4h18" stroke="#888" strokeWidth="3" strokeDasharray="1 1" /></svg> },
    { name: 'Paint', icon: <svg viewBox="0 0 32 32" className="w-8 h-8"><path d="M2 22C1 12 10 6 19 8s10 9 6 15-9 6-11 4 1-5-2-6-9 5-10 1z" fill="#dfeefa" stroke="#8fb6d8" /><circle cx="7" cy="18" r="2.500" fill="#e0453a" /><circle cx="11.500" cy="13" r="2.500" fill="#58b848" /><circle cx="18" cy="10.500" r="2.800" fill="#f2b430" /><path d="M26 6L17 31" stroke="#e98a2b" strokeWidth="3" /><path d="M23 5l2-4 8 1-4 6z" fill="#a9825a" /></svg> },
];

const Taskbar = () => (
    <div className="relative z-20 flex h-10 shrink-0 items-center overflow-hidden border-t-2 border-[#17304d] bg-linear-to-r from-[#1f639c] via-[#3a9bd3] via-25% to-[#163f70] font-['Open_Sans','Liberation_Sans',sans-serif] text-xs text-white">
        <div className="absolute inset-0 bg-linear-to-r from-transparent from-30% via-[#1e67b0] via-80% to-[#153f70] to-90%" />
        <svg viewBox="0 0 110 38" className="absolute left-[67%] h-full w-[110px]"><path d="M12 -6Q58 12 90 44" fill="none" stroke="#6fb0ee" strokeWidth="14" opacity=".4" /><path d="M12 -6Q58 12 90 44" fill="none" stroke="#b4d8fb" strokeWidth="8" opacity=".8" /></svg>
        <button aria-label="Iniciar" className="relative ml-2 mr-[14px]">
            <svg viewBox="0 0 38 38" className="w-[38px] h-[38px]">
                <circle cx="19" cy="19" r="18" fill="#2a6592" stroke="#a5c9e0" />
                <path d="M2 17a17 17 0 0 1 34 0q-17 6-34 0z" fill="#88aec8" opacity=".7" />
                <path d="M9 12q4-2.500 9 0l-1.500 7q-5-2.500-9 0z" fill="#ee5a28" />
                <path d="M19.500 12.500q5 2.500 10 0l-2 7q-4.500 2-9.500 0z" fill="#86c440" />
                <path d="M7 20.500q4-2.500 9 0l-1.500 7q-5-2.500-9 0z" fill="#46a8e4" />
                <path d="M17.500 21q5 2.500 9.500 0l-2 7q-4.500 2-9 0z" fill="#fbc628" />
            </svg>
        </button>
        <div className="relative flex gap-1 self-stretch">
            {apps.map((a) => (
                <button key={a.name} aria-label={a.name} className={`flex w-[58px] items-center justify-center rounded-[3px] border border-[#1f4d74] shadow-[inset_0_0_0_1px_rgba(255,255,255,0.4)] ${a.light ? 'bg-linear-to-b from-[#e0f1fa] to-[#8cc8e6]' : 'bg-linear-to-br from-[#a9cde6] to-[#4da3d4]'}`}>{a.icon}</button>
            ))}
        </div>
        <span className="relative ml-auto mr-3.5 mb-1">PT</span>
        <svg viewBox="0 0 8 4" className="relative w-2 h-1 mr-4 ml-1"><path d="M0 4h8L4 0z" fill="#fff" /></svg>
        <svg viewBox="0 0 16 16" className="relative w-4 h-4 mr-2"><path d="M1 1v14" stroke="#fff" strokeWidth="1.500" /><path d="M2 2q3-1 6 1t6 0v7q-3 1-6 0t-6 0z" fill="#fff" /><circle cx="11" cy="11" r="4.500" fill="#d8281c" /><path d="M9 9l4 4M13 9l-4 4" stroke="#fff" strokeWidth="1.500" /></svg>
        <svg viewBox="0 0 16 16" className="relative w-4 h-4 mr-2" fill="none" stroke="#fff"><path d="M1 5h3l4-4v14l-4-4H1z" fill="#fff" /><path d="M10 5q2 3 0 6M12 3q4 5 0 10" /></svg>
        <svg viewBox="0 0 16 16" className="relative w-4 h-4 mr-4" fill="none" stroke="#fff" strokeWidth="1.300"><path d="M5 4h10v8H4V8M7 14.500h8M10 12v2M2.500 1v6M1 2v3h3V2" /></svg>
        <div className="relative w-[62px] mr-[9px] text-center text-[11px] leading-[17px]"><div>17:57</div><div>05/02/2018</div></div>
        <button aria-label="Mostrar área de trabalho" className="relative w-3.5 self-stretch border border-[#6287ab] bg-linear-to-b from-[#6888a8] to-[#1c4877]" />
    </div>
);

const App = () => (
    <div className="relative flex h-screen flex-col overflow-hidden bg-white font-['Liberation_Sans',Arial,sans-serif] text-[13px]">
        <Browser />
        <div className="flex flex-1 min-h-0">
            <div className="flex flex-1 min-w-0 flex-col">
                <Navbar />
                <Subhead />
                <main className="flex-1 min-h-0 overflow-hidden">
                    <div className="-mt-[21px] flex items-start gap-[51px] px-5">
                        <EditorPanel />
                        <SettingsPanel />
                    </div>
                </main>
                <StatusBar />
            </div>
            <Scrollbar />
        </div>
        <Taskbar />
        <div className="absolute right-0 bottom-[45px] z-30 h-[60px] w-1 bg-black" />
    </div>
);

export default App;
